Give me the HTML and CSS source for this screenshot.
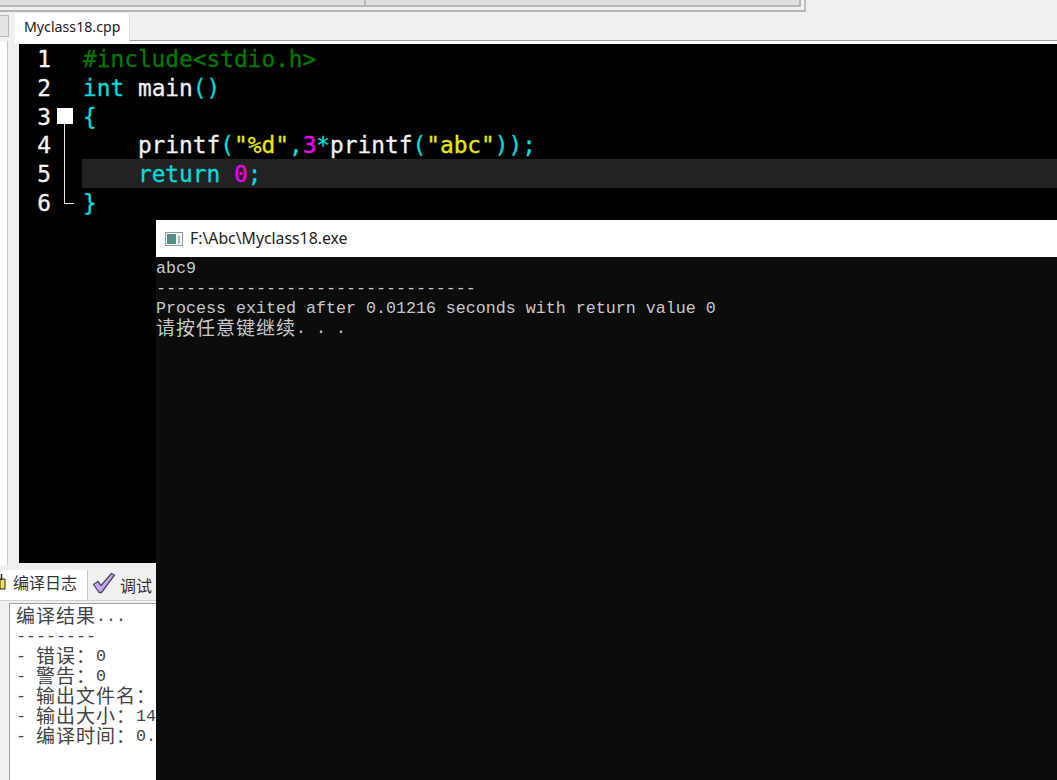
FILE: index.html
```html
<!DOCTYPE html>
<html lang="zh-CN">
<head>
<meta charset="utf-8">
<title>Myclass18</title>
<link rel="stylesheet" href="styles.css">
</head>
<body>
<div class="app">
  <div class="topbar">
    <div class="toolbar">
      <div class="tool-cell tool-first"></div>
      <div class="tool-cell tool-second"></div>
    </div>
  </div>
  <div class="workspace">
    <div class="side">
      <div class="side-tab"></div>
      <div class="side-panel"></div>
    </div>
    <div class="editor-area">
      <div class="tabstrip"><div class="file-tab">Myclass18.cpp</div></div>
      <div class="editor">
        <div class="row"><span class="num">1</span><span class="fold"></span><span class="code"><span class="pre">#include&lt;stdio.h&gt;</span></span></div>
        <div class="row"><span class="num">2</span><span class="fold"></span><span class="code"><span class="kw">int</span> main<span class="kw">()</span></span></div>
        <div class="row"><span class="num">3</span><span class="fold fold-open"></span><span class="code"><span class="kw">{</span></span></div>
        <div class="row"><span class="num">4</span><span class="fold fold-line"></span><span class="code">    printf<span class="kw">(</span><span class="str">"%d"</span><span class="kw">,</span><span class="lit">3</span><span class="kw">*</span>printf<span class="kw">(</span><span class="str">"abc"</span><span class="kw">));</span></span></div>
        <div class="row"><span class="num">5</span><span class="fold fold-line"></span><span class="code code-active">    <span class="kw">return</span> <span class="lit">0</span><span class="kw">;</span></span></div>
        <div class="row"><span class="num">6</span><span class="fold fold-end"></span><span class="code"><span class="kw">}</span></span></div>
      </div>
    </div>
  </div>
  <div class="bottom">
    <div class="bottom-tabs">
      <div class="btab btab-active">
        <svg class="log-icon" width="6" height="16" viewBox="0 0 6 16"><path d="M0 5h5v10H0z" fill="#f3e04a" stroke="#222" stroke-width="1"/><path d="M1.500 0v6" stroke="#222" stroke-width="1.500" fill="none"/></svg>
        <span>编译日志</span>
      </div>
      <div class="btab">
        <svg class="check-icon" width="24" height="22" viewBox="0 0 24 22"><path d="M1.500 12.500 6 9.500l3 4L19.500 1.500l3 1.500L9.500 20.500H7z" fill="#c7a5ee" stroke="#4a4a5e" stroke-width="1.300" stroke-linejoin="round"/></svg>
        <span>调试</span>
      </div>
    </div>
    <div class="log">
      <div class="term-line"><span class="cjk">编译结果</span>...</div>
      <div class="term-line">--------</div>
      <div class="term-line">- <span class="cjk">错误：</span>0</div>
      <div class="term-line">- <span class="cjk">警告：</span>0</div>
      <div class="term-line">- <span class="cjk">输出文件名：</span></div>
      <div class="term-line">- <span class="cjk">输出大小：</span>14</div>
      <div class="term-line">- <span class="cjk">编译时间：</span>0.</div>
    </div>
  </div>
  <div class="console">
    <div class="console-title">
      <svg class="console-icon" width="18" height="14" viewBox="0 0 18 14"><rect x="0.500" y="0.500" width="17" height="13" fill="#f4f4f4" stroke="#9a9a9a"/><rect x="2" y="2" width="9" height="10" fill="#4f8f86"/><rect x="13" y="4" width="2" height="8" fill="#9fc4b8"/></svg>
      <span>F:\Abc\Myclass18.exe</span>
    </div>
    <div class="console-body">
      <div class="term-line">abc9</div>
      <div class="term-line">--------------------------------</div>
      <div class="term-line">Process exited after 0.01216 seconds with return value 0</div>
      <div class="term-line"><span class="cjk">请按任意键继续</span>. . .</div>
    </div>
  </div>
</div>
</body>
</html>
```
FILE: styles.css
```css
* { box-sizing: border-box; }
html, body { margin: 0; padding: 0; }
body { background: #f0f0f0; overflow: hidden; }

.app {
  position: relative;
  width: 1057px;
  height: 780px;
  overflow: hidden;
  background: #f0f0f0;
  display: flex;
  flex-direction: column;
}

.topbar { height: 13px; flex: none; }
.toolbar {
  width: 806px;
  height: 12px;
  padding-bottom: 4px;
  padding-right: 3px;
  display: flex;
  background: #f0f0f0;
  border-bottom: 2px solid #b4b4b4;
  border-right: 2px solid #c0c0c0;
}
.tool-cell {
  background: #e0e0e0;
  border-bottom: 2px solid #b8b8b8;
  height: 7px;
}
.tool-first { width: 366px; border-right: 2px solid #b8b8b8; }
.tool-second { flex: 1; border-right: 2px solid #b8b8b8; }

.workspace { height: 553px; flex: none; display: flex; }

.side { width: 15px; flex: none; padding-top: 2px; }
.side-tab {
  width: 9px;
  height: 22px;
  background: #e4e4e4;
  border: 1px solid #b8b8b8;
  border-left: 0;
}
.side-panel {
  width: 8px;
  height: 524px;
  margin-top: 4px;
  background: #fff;
  border-right: 1px solid #c8c8c8;
}

.editor-area {
  flex: 1;
  min-width: 0;
  display: flex;
  flex-direction: column;
  padding-bottom: 3px;
}
.tabstrip {
  height: 31px;
  flex: none;
  background: #f0f0f0;
  border-bottom: 3px solid #fff;
  box-shadow: inset 0 -1px 0 #a0a0a0;
  display: flex;
}
.file-tab {
  width: 115px;
  height: 28px;
  background: #fff;
  border-right: 1px solid #e0e0e0;
  padding-left: 9px;
  font: 14.200px/27px "Noto Sans", sans-serif;
  color: #222;
}

.editor {
  flex: 1;
  margin-left: 4px;
  background: #000;
  font-family: "DejaVu Sans Mono", monospace;
  font-size: 22.800px;
  color: #f2f2f2;
  -webkit-text-stroke: 0.3px;
}
.row { display: flex; height: 28.750px; line-height: 30.750px; }
.num { width: 32px; flex: none; text-align: right; color: #f4f4f4; }
.fold { width: 31px; flex: none; position: relative; }
.fold-open::before {
  content: "";
  position: absolute;
  left: 6px;
  top: 6px;
  width: 16px;
  height: 16px;
  background: #fff;
}
.fold-open::after {
  content: "";
  position: absolute;
  left: 13px;
  top: 22px;
  bottom: 0;
  width: 1px;
  background: #e8e8e8;
}
.fold-line::before {
  content: "";
  position: absolute;
  left: 13px;
  top: 0;
  bottom: 0;
  width: 1px;
  background: #e8e8e8;
}
.fold-end::before {
  content: "";
  position: absolute;
  left: 13px;
  top: 0;
  width: 9px;
  height: 15px;
  border-left: 1px solid #e8e8e8;
  border-bottom: 1px solid #e8e8e8;
}
.code { flex: 1; white-space: pre; padding-left: 1px; }
.code-active { background: #222; }
.pre { color: #007a00; }
.kw { color: #00dede; }
.str { color: #e8e800; }
.lit { color: #f000f0; }

.bottom { flex: 1; min-height: 0; }
.bottom-tabs {
  height: 35px;
  display: flex;
  align-items: flex-end;
  border-bottom: 1px solid #d0d0d0;
}
.btab {
  height: 28px;
  display: flex;
  align-items: flex-start;
  font: 16px/26px "Noto Sans CJK SC", sans-serif;
  color: #333;
  width: 68px;
  padding-left: 4px;
  gap: 4px;
}
.btab-active {
  width: 88px;
  height: 30px;
  padding-left: 0;
  gap: 7px;
  line-height: 24px;
  background: #fff;
  border-right: 1px solid #c8c8c8;
}
.log-icon { flex: none; margin-top: 4px; }
.check-icon { flex: none; margin-top: 0; }

.log {
  margin: 2px 0 0 9px;
  height: 200px;
  padding: 3px 0 0 6px;
  background: #fff;
  border: 1px solid #a0a0a0;
  border-width: 1px 0 0 1px;
  color: #444;
  font-family: "Liberation Mono", "Noto Sans CJK SC", monospace;
  font-size: 16.670px;
}
.term-line { height: 20px; line-height: 20px; white-space: pre; }
.cjk {
  display: inline-block;
  height: 20px;
  margin-top: -2px;
  vertical-align: top;
  font-family: "Noto Sans CJK SC", sans-serif;
  font-size: 19px;
  letter-spacing: 1px;
  line-height: 20px;
}

.console {
  position: absolute;
  left: 156px;
  top: 220px;
  right: 0;
  bottom: 0;
  display: flex;
  flex-direction: column;
  background: #0c0c0c;
}
.console-title {
  height: 37px;
  flex: none;
  background: #fff;
  display: flex;
  align-items: center;
  padding-left: 9px;
  gap: 7px;
  font: 15.800px/1 "Noto Sans", sans-serif;
  color: #222;
}
.console-icon { flex: none; }
.console-body {
  padding-top: 2px;
  color: #c8c8c8;
  font-family: "Liberation Mono", "Noto Sans CJK SC", monospace;
  font-size: 16.670px;
}
```
